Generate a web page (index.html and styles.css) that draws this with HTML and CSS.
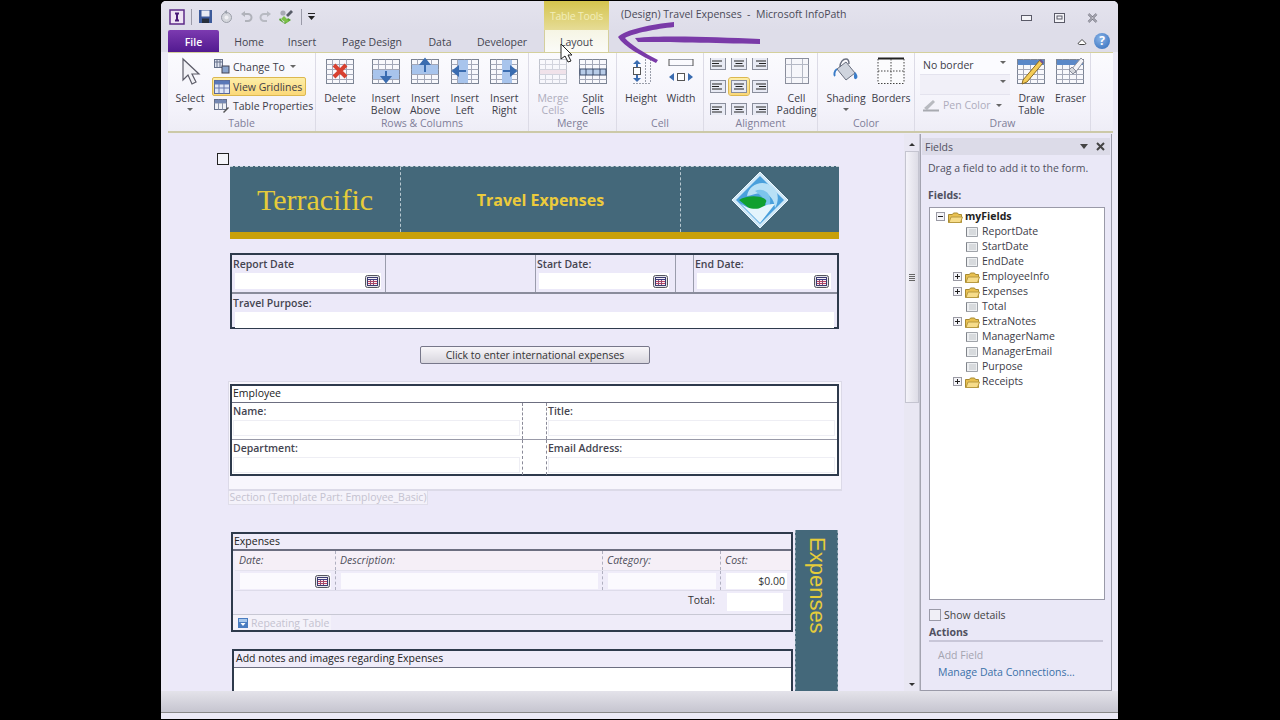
FILE: index.html
```html
<!DOCTYPE html>
<html lang="en">
  <head>
    <meta charset="UTF-8" />
    <meta name="viewport" content="width=device-width, initial-scale=1.0" />
    <title>Travel Expenses - Microsoft InfoPath</title>
    <link rel="stylesheet" href="styles.css">
  </head>
  <body>
    <svg class="defs" width="0" height="0">
      <defs>
        <g id="grid">
          <rect x="1.5" y="3.5" width="27" height="24" fill="#f8f8fc" stroke="#7c8494"/>
          <path d="M1.5 8.5h27M1.5 13.5h27M1.5 18.5h27M1.5 23.5h27M7.5 3.5v24M14.5 3.5v24M21.5 3.5v24" fill="none" stroke="#a4a8b8"/>
        </g>
        <g id="al-l"><rect x="1.5" y="1.5" width="15" height="12" fill="#e8eaf4" stroke="#8a8e9c"/><path d="M3 5h10M3 7.5h7M3 10h10" stroke="#222" fill="none"/></g>
        <g id="al-c"><rect x="1.5" y="1.5" width="15" height="12" fill="#e8eaf4" stroke="#8a8e9c"/><path d="M4 5h10M5.5 7.5h7M4 10h10" stroke="#222" fill="none"/></g>
        <g id="al-r"><rect x="1.5" y="1.5" width="15" height="12" fill="#e8eaf4" stroke="#8a8e9c"/><path d="M5 5h10M8 7.5h7M5 10h10" stroke="#222" fill="none"/></g>
        <g id="cal">
          <rect x="0.5" y="0.5" width="14" height="12" rx="2" fill="#e4e4e8" stroke="#55555f"/>
          <rect x="2.5" y="2.5" width="10" height="8" fill="#f6f0f4" stroke="#3c3c70"/>
          <path d="M3 4.5h9" stroke="#3c3c80"/>
          <path d="M3 6.5h9M3 8.5h9" stroke="#c04060"/>
          <path d="M5.5 5v5M8.5 5v5" stroke="#8a5070"/>
        </g>
        <g id="field">
          <path d="M1.5 1.5h11v9h-11z" fill="#eef0f2" stroke="#a0a4aa"/>
          <path d="M4 4h7M4 6h7M4 8h7" stroke="#c0c4c8"/>
          <path d="M1.5 1.5v9" stroke="#80848a"/>
        </g>
        <g id="folder">
          <path d="M0.5 3.5h4l1-1.5h4l1 1.5h3v8h-13z" fill="#e8c050" stroke="#a88a30"/>
          <path d="M1 11.5l2-5.5h11.5l-2 5.5z" fill="#f6dc8a" stroke="#b89a40"/>
        </g>
        <g id="plus"><rect x="0.5" y="0.5" width="8" height="8" fill="#f4f4f8" stroke="#9a9aa4"/><path d="M2 4.5h5M4.5 2v5" stroke="#222"/></g>
      </defs>
    </svg>

    <div class="window">
      <div class="titlebar">
        <div class="qat">
          <svg width="16" height="16" viewBox="0 0 16 16"><rect x="1" y="1" width="14" height="14" fill="#efe4f4" stroke="#5c2a88" stroke-width="1.5"/><path d="M6 4.5h4M6 11.5h4M8 4.5v7" stroke="#4a1a78" stroke-width="2" fill="none"/></svg>
          <span class="qat-sep"></span>
          <svg width="15" height="15" viewBox="0 0 15 15"><path d="M1 1h13v13H1z" fill="#3c5a9a"/><rect x="3.5" y="1.5" width="8" height="6" fill="#e8ecf4"/><rect x="4" y="9.5" width="7" height="4.5" fill="#28303c"/></svg>
          <svg width="15" height="15" viewBox="0 0 15 15"><circle cx="7.5" cy="8.5" r="5" fill="#d4d6dc" stroke="#9a9ea8"/><circle cx="7.5" cy="8.5" r="2" fill="#f0f0f4"/><path d="M5 3l3-2v4z" fill="#9aa0aa"/></svg>
          <svg width="13" height="15" viewBox="0 0 13 15"><path d="M3 5h5a3.5 3.5 0 0 1 0 7H5" fill="none" stroke="#b0b2ba" stroke-width="2"/><path d="M1 5l4-3v6z" fill="#b0b2ba"/></svg>
          <svg width="13" height="15" viewBox="0 0 13 15"><path d="M10 5H5a3.5 3.5 0 0 0 0 7h3" fill="none" stroke="#b8bac2" stroke-width="2"/><path d="M12 5l-4-3v6z" fill="#b8bac2"/></svg>
          <svg width="17" height="17" viewBox="0 0 17 17"><path d="M2 10l4 5 4-5 3 2-6 4-6-4z" fill="#56a030"/><path d="M3 11l3-3 5 5-3 2z" fill="#7cc048"/><path d="M8 7l5-5 2 2-5 5z" fill="#585c68"/><circle cx="5" cy="5" r="2.6" fill="#a8aab4"/></svg>
          <span class="qat-sep"></span>
          <svg width="7" height="7" viewBox="0 0 7 7"><path d="M0 .5h7M0 3h7l-3.5 4z" fill="#222" stroke="none"/><path d="M0 .5h7" stroke="#222"/></svg>
        </div>
        <div class="context-tab">Table Tools</div>
        <div class="doc-title">(Design) Travel Expenses &nbsp;-&nbsp; Microsoft InfoPath</div>
        <div class="win-controls">
          <svg width="11" height="6" viewBox="0 0 11 6"><rect x=".5" y=".5" width="10" height="5" fill="#f4f4f8" stroke="#5a5a68"/></svg>
          <svg width="11" height="10" viewBox="0 0 11 10"><rect x=".5" y=".5" width="10" height="9" fill="#f4f4f8" stroke="#5a5a68"/><rect x="3" y="3" width="5" height="3" fill="none" stroke="#5a5a68"/></svg>
          <svg width="11" height="10" viewBox="0 0 11 10"><path d="M1.5 1l8 8M9.5 1l-8 8" stroke="#6a6a78" stroke-width="2.4"/><path d="M1.5 1l8 8M9.5 1l-8 8" stroke="#f0f0f4" stroke-width=".8"/></svg>
        </div>
      </div>

      <div class="tabs">
        <div class="tab tab-file">File</div>
        <div class="tab tab-home">Home</div>
        <div class="tab tab-insert">Insert</div>
        <div class="tab tab-page">Page Design</div>
        <div class="tab tab-data">Data</div>
        <div class="tab tab-dev">Developer</div>
        <div class="tab tab-layout">Layout</div>
        <div class="tab-right">
          <svg width="10" height="7" viewBox="0 0 10 7"><path d="M1 5.5l4-4 4 4-1.5 1h-5z" fill="#fff" stroke="#444"/></svg>
          <span class="help">?</span>
        </div>
      </div>

      <div class="ribbon">
        <div class="group group-table">
          <div class="group-body">
            <div class="big select-btn">
              <svg width="30" height="30" viewBox="0 0 30 30"><path d="M8 3v21l5-5 4 9 4-2-4-8h7z" fill="#f2f2f6" stroke="#5c5c68" stroke-width="1.2"/></svg>
              <span>Select</span>
              <i class="drop"></i>
            </div>
            <div class="small-col">
              <div class="small">
                <svg width="16" height="15" viewBox="0 0 16 15"><rect x=".5" y=".5" width="8" height="8" fill="#dfe4f0" stroke="#66708a"/><path d="M.5 3h8M3 .5v8M6 .5v8" stroke="#66708a"/><rect x="8" y="7" width="7" height="7" fill="#8aa4cc" stroke="#445"/></svg>
                Change To <i class="drop small-drop"></i>
              </div>
              <div class="small small-on">
                <svg width="16" height="14" viewBox="0 0 16 14"><rect x=".5" y=".5" width="15" height="13" fill="#dfe6f6" stroke="#5a6a98"/><path d="M.5 4h15M.5 8h15M5 .5v13M10 .5v13" stroke="#6a7ab0"/><rect x="1" y="1" width="14" height="3" fill="#5a78b8"/></svg>
                View Gridlines
              </div>
              <div class="small">
                <svg width="16" height="15" viewBox="0 0 16 15"><rect x=".5" y=".5" width="12" height="10" fill="#eef0f6" stroke="#66708a"/><path d="M.5 4h12M4.500 .5v10M8.500 .5v10" stroke="#8a94aa"/><rect x="1" y="1" width="11" height="3" fill="#7488b4"/><path d="M9 13l5-5 1 1-5 5z" fill="#555"/></svg>
                Table Properties
              </div>
            </div>
          </div>
          <div class="group-label">Table</div>
        </div>

        <div class="group group-rows">
          <div class="group-body">
            <div class="big delete-btn">
              <svg width="30" height="30" viewBox="0 0 30 30"><use href="#grid"/><path d="M9 9l12 12M21 9L9 21" stroke="#d84030" stroke-width="4"/></svg>
              <span>Delete</span>
              <i class="drop"></i>
            </div>
            <div class="big">
              <svg width="30" height="30" viewBox="0 0 30 30"><use href="#grid"/><rect x="2" y="14" width="26" height="9" fill="#a8c4ec"/><path d="M15 15v10M11 21l4 5 4-5z" fill="#3a6cb0" stroke="#3a6cb0" stroke-width="2"/></svg>
              <span>Insert<br>Below</span>
            </div>
            <div class="big">
              <svg width="30" height="30" viewBox="0 0 30 30"><use href="#grid"/><rect x="2" y="9" width="26" height="9" fill="#a8c4ec"/><path d="M15 16V5M11 8l4-5 4 5z" fill="#3a6cb0" stroke="#3a6cb0" stroke-width="2"/></svg>
              <span>Insert<br>Above</span>
            </div>
            <div class="big">
              <svg width="30" height="30" viewBox="0 0 30 30"><use href="#grid"/><rect x="8" y="4" width="10" height="23" fill="#a8c4ec"/><path d="M16 15H5M8 11l-5 4 5 4z" fill="#3a6cb0" stroke="#3a6cb0" stroke-width="2"/></svg>
              <span>Insert<br>Left</span>
            </div>
            <div class="big">
              <svg width="30" height="30" viewBox="0 0 30 30"><use href="#grid"/><rect x="13" y="4" width="10" height="23" fill="#a8c4ec"/><path d="M14 15h11M22 11l5 4-5 4z" fill="#3a6cb0" stroke="#3a6cb0" stroke-width="2"/></svg>
              <span>Insert<br>Right</span>
            </div>
          </div>
          <div class="group-label">Rows &amp; Columns</div>
        </div>

        <div class="group group-merge">
          <div class="group-body">
            <div class="big disabled">
              <svg width="30" height="30" viewBox="0 0 30 30" opacity=".45"><use href="#grid"/><rect x="2" y="14" width="26" height="4" fill="#e8c8d4"/></svg>
              <span>Merge<br>Cells</span>
            </div>
            <div class="big">
              <svg width="30" height="30" viewBox="0 0 30 30"><use href="#grid"/><rect x="2" y="13" width="26" height="6" fill="#b8cce8" stroke="#3a4a6a"/><path d="M8 13v6M15 13v6M22 13v6" stroke="#3a4a6a"/></svg>
              <span>Split<br>Cells</span>
            </div>
          </div>
          <div class="group-label">Merge</div>
        </div>

        <div class="group group-cell">
          <div class="group-body">
            <div class="big">
              <svg width="30" height="30" viewBox="0 0 30 30"><path d="M11 8v4M11 18v5" stroke="#3a6cb0" stroke-width="2"/><path d="M7 8l4-4 4 4zM7 22l4 4 4-4z" fill="#3a6cb0"/><rect x="7.500" y="11.500" width="7" height="7" fill="#fff" stroke="#555"/><path d="M19.500 3v24M24.500 3v24" stroke="#9a9eaa" stroke-dasharray="2 1"/><path d="M7 27.500h18" stroke="#9a9eaa" stroke-dasharray="2 1"/></svg>
              <span>Height</span>
            </div>
            <div class="big">
              <svg width="30" height="30" viewBox="0 0 30 30"><path d="M3 3.500h24M3 9.500h24" stroke="#9a9eaa"/><path d="M3 3v7M27 3v7" stroke="#555"/><path d="M3 21l5-4v8zM27 21l-5-4v8z" fill="#3a6cb0"/><rect x="11.500" y="17.500" width="7" height="7" fill="#fff" stroke="#555"/></svg>
              <span>Width</span>
            </div>
          </div>
          <div class="group-label">Cell</div>
        </div>

        <div class="group group-align">
          <div class="group-body">
            <div class="align-grid">
              <svg class="al" width="18" height="15" viewBox="0 0 18 15"><use href="#al-l" y="-2"/></svg>
              <svg class="al" width="18" height="15" viewBox="0 0 18 15"><use href="#al-c" y="-2"/></svg>
              <svg class="al" width="18" height="15" viewBox="0 0 18 15"><use href="#al-r" y="-2"/></svg>
              <svg class="al" width="18" height="15" viewBox="0 0 18 15"><use href="#al-l"/></svg>
              <svg class="al al-on" width="18" height="15" viewBox="0 0 18 15"><use href="#al-c"/></svg>
              <svg class="al" width="18" height="15" viewBox="0 0 18 15"><use href="#al-r"/></svg>
              <svg class="al" width="18" height="15" viewBox="0 0 18 15"><use href="#al-l" y="2"/></svg>
              <svg class="al" width="18" height="15" viewBox="0 0 18 15"><use href="#al-c" y="2"/></svg>
              <svg class="al" width="18" height="15" viewBox="0 0 18 15"><use href="#al-r" y="2"/></svg>
            </div>
            <div class="big padding-btn">
              <svg width="30" height="30" viewBox="0 0 30 30"><rect x="3.500" y="2.500" width="23" height="25" fill="#f6f6fa" stroke="#8a8e9c"/><path d="M9.500 3v24M20.500 3v24M3.500 8.500h23M3.500 21.500h23" stroke="#b4b8c4"/></svg>
              <span>Cell<br>Padding</span>
            </div>
          </div>
          <div class="group-label">Alignment</div>
        </div>

        <div class="group group-color">
          <div class="group-body">
            <div class="big big-wide">
              <svg width="30" height="30" viewBox="0 0 30 30"><path d="M6 13L15 6l9 11-9 7z" fill="#cfd4de" stroke="#6a7080"/><path d="M9 11c0-5 3-8 6-8s3 3 3 5" fill="none" stroke="#6a7080" stroke-width="1.500"/><path d="M24 16c3 3 3 6 1 7s-3-3-1-7z" fill="#3a7cc8"/><path d="M6 13c-3 2-3 6-2 7" fill="none" stroke="#3a7cc8" stroke-width="2"/></svg>
              <span>Shading</span>
              <i class="drop"></i>
            </div>
            <div class="big">
              <svg width="30" height="30" viewBox="0 0 30 30"><rect x="2" y="2" width="26" height="26" fill="#fbfbfd"/><path d="M2 2.500h26M2 2.500" stroke="#222" stroke-width="2"/><path d="M15 3v24M2 15h26M2 3v24M28 3v24M2 27.500h26" stroke="#444" stroke-dasharray="1.500 1.500"/></svg>
              <span>Borders</span>
            </div>
          </div>
          <div class="group-label">Color</div>
        </div>

        <div class="group group-draw">
          <div class="group-body">
            <div class="pen-col">
              <div class="combo">No border <i class="drop combo-drop"></i></div>
              <div class="combo combo-empty"><i class="drop combo-drop"></i></div>
              <div class="pen-color">
                <svg width="18" height="14" viewBox="0 0 18 14"><path d="M2 10l9-8 2 2-8 8z" fill="#b8bac0"/><path d="M1 12.500h16" stroke="#a8aab0" stroke-width="2"/></svg>
                Pen Color <i class="drop small-drop"></i>
              </div>
            </div>
            <div class="big">
              <svg width="30" height="30" viewBox="0 0 30 30"><use href="#grid"/><rect x="2" y="4" width="26" height="5" fill="#5a88c8"/><path d="M7 24L24 4l3 3L11 26l-5 2z" fill="#f4cc58" stroke="#8a6a20"/><path d="M24 4l3 3" stroke="#705090" stroke-width="2"/></svg>
              <span>Draw<br>Table</span>
            </div>
            <div class="big">
              <svg width="30" height="30" viewBox="0 0 30 30"><use href="#grid"/><rect x="2" y="4" width="26" height="5" fill="#5a88c8"/><path d="M16 14L26 2l3 3-9 12z" fill="#f4f4f8" stroke="#8a8e9c"/><path d="M14 14l3-3 4 4-3 3z" fill="#d4d6dc" stroke="#8a8e9c"/></svg>
              <span>Eraser</span>
            </div>
          </div>
          <div class="group-label">Draw</div>
        </div>
      </div>

      <div class="workspace">
        <div class="canvas">
          <div class="form">
            <div class="table-handle"></div>

            <div class="banner">
              <div class="banner-cell banner-logo">Terracific</div>
              <div class="banner-cell banner-title">Travel Expenses</div>
              <div class="banner-cell banner-mark">
                <svg width="58" height="58" viewBox="0 0 58 58">
                  <path d="M29 1l28 28-28 28L1 29z" fill="#cfe8f8" stroke="#eaf6fc"/>
                  <path d="M29 5L53 29 29 53 5 29z" fill="#4aa0dc"/>
                  <path d="M16 25c2-12 16-17 26-9 6 5 6 14 2 21-1-9-6-15-13-15-7 0-11 3-15 3z" fill="#b8e0f6"/>
                  <path d="M24 20c6-3 14 0 15 7 1 5-1 9-3 12-1-8-3-13-12-19z" fill="#7cc4ec"/>
                  <path d="M8 29c8-5 22-5 27 0 1 2-1 3-1 5L29 46z" fill="#10a030"/>
                  <path d="M29 52L9 32c6 5 16 8 22 4 6-3 9-3 13-3z" fill="#e4f4fc"/>
                </svg>
              </div>
            </div>

            <div class="box report-box">
              <div class="report-row">
                <div class="cell report-date">
                  <label>Report Date</label>
                  <div class="input"><svg class="cal-icon" width="15" height="13"><use href="#cal"/></svg></div>
                </div>
                <div class="cell report-gap"></div>
                <div class="cell report-start">
                  <label>Start Date:</label>
                  <div class="input"><svg class="cal-icon" width="15" height="13"><use href="#cal"/></svg></div>
                </div>
                <div class="cell report-gap2"></div>
                <div class="cell report-end">
                  <label>End Date:</label>
                  <div class="input"><svg class="cal-icon" width="15" height="13"><use href="#cal"/></svg></div>
                </div>
              </div>
              <div class="cell purpose">
                <label>Travel Purpose:</label>
                <div class="input input-wide"></div>
              </div>
            </div>

            <div class="intl-row"><div class="intl-btn">Click to enter international expenses</div></div>

            <div class="section">
              <div class="box employee-box">
                <div class="box-title">Employee</div>
                <div class="employee-row">
                  <div class="emp-cell"><label>Name:</label><div class="input input-line"></div></div>
                  <div class="emp-gap"></div>
                  <div class="emp-cell"><label>Title:</label><div class="input input-line"></div></div>
                </div>
                <div class="employee-row employee-last">
                  <div class="emp-cell"><label>Department:</label><div class="input input-line"></div></div>
                  <div class="emp-gap"></div>
                  <div class="emp-cell"><label>Email Address:</label><div class="input input-line"></div></div>
                </div>
              </div>
            </div>
            <div class="section-tag">Section (Template Part: Employee_Basic)</div>

            <div class="expense-wrap">
              <div class="expense-col">
                <div class="box expense-box">
                  <div class="box-title expense-title">Expenses</div>
                  <div class="exp-grid exp-head">
                    <div>Date:</div><div>Description:</div><div>Category:</div><div>Cost:</div>
                  </div>
                  <div class="exp-grid exp-row">
                    <div><div class="input exp-input"><svg class="cal-icon" width="15" height="13"><use href="#cal"/></svg></div></div>
                    <div><div class="input exp-input"></div></div>
                    <div><div class="input exp-input"></div></div>
                    <div><div class="input exp-input exp-cost">$0.00</div></div>
                  </div>
                  <div class="exp-total">
                    <span>Total:</span>
                    <div class="input total-input"></div>
                  </div>
                  <div class="repeat-row">
                    <div class="repeat-tag">
                      <svg width="10" height="10" viewBox="0 0 10 10"><rect width="10" height="10" fill="#4a7cc0"/><rect x="1" y="1" width="8" height="3" fill="#a8c8ec"/><path d="M2.500 5h5L5 8z" fill="#fff"/></svg>
                      Repeating Table
                    </div>
                  </div>
                </div>
                <div class="box notes-box">
                  <div class="box-title notes-title">Add notes and images regarding Expenses</div>
                  <div class="notes-body"></div>
                </div>
              </div>
              <div class="expense-side"><span>Expenses</span></div>
            </div>
          </div>
        </div>

        <div class="scrollbar">
          <i class="arrow-up"></i>
          <div class="thumb"><b></b></div>
          <i class="arrow-down"></i>
        </div>

        <div class="pane">
          <div class="pane-head">
            <span>Fields</span>
            <i class="pane-drop"></i>
            <svg width="9" height="9" viewBox="0 0 9 9"><path d="M1 1l7 7M8 1L1 8" stroke="#444" stroke-width="2"/></svg>
          </div>
          <div class="pane-hint">Drag a field to add it to the form.</div>
          <div class="pane-label">Fields:</div>
          <div class="tree">
            <div class="node node-root">
              <svg class="exp" width="9" height="9"><rect x=".5" y=".5" width="8" height="8" fill="#f4f4f8" stroke="#9a9aa4"/><path d="M2 4.500h5" stroke="#222"/></svg>
              <svg class="ico" width="15" height="12"><use href="#folder"/></svg>
              <b>myFields</b>
            </div>
            <div class="node"><span class="exp-space"></span><svg class="ico" width="15" height="12"><use href="#field"/></svg>ReportDate</div>
            <div class="node"><span class="exp-space"></span><svg class="ico" width="15" height="12"><use href="#field"/></svg>StartDate</div>
            <div class="node"><span class="exp-space"></span><svg class="ico" width="15" height="12"><use href="#field"/></svg>EndDate</div>
            <div class="node"><svg class="exp" width="9" height="9"><use href="#plus"/></svg><svg class="ico" width="15" height="12"><use href="#folder"/></svg>EmployeeInfo</div>
            <div class="node"><svg class="exp" width="9" height="9"><use href="#plus"/></svg><svg class="ico" width="15" height="12"><use href="#folder"/></svg>Expenses</div>
            <div class="node"><span class="exp-space"></span><svg class="ico" width="15" height="12"><use href="#field"/></svg>Total</div>
            <div class="node"><svg class="exp" width="9" height="9"><use href="#plus"/></svg><svg class="ico" width="15" height="12"><use href="#folder"/></svg>ExtraNotes</div>
            <div class="node"><span class="exp-space"></span><svg class="ico" width="15" height="12"><use href="#field"/></svg>ManagerName</div>
            <div class="node"><span class="exp-space"></span><svg class="ico" width="15" height="12"><use href="#field"/></svg>ManagerEmail</div>
            <div class="node"><span class="exp-space"></span><svg class="ico" width="15" height="12"><use href="#field"/></svg>Purpose</div>
            <div class="node"><svg class="exp" width="9" height="9"><use href="#plus"/></svg><svg class="ico" width="15" height="12"><use href="#folder"/></svg>Receipts</div>
          </div>
          <div class="show-details"><span class="check"></span>Show details</div>
          <div class="actions-label">Actions</div>
          <div class="action action-off">Add Field</div>
          <div class="action action-link">Manage Data Connections...</div>
        </div>
      </div>

      <div class="statusbar"></div>

      <svg class="pointer-arrow" width="160" height="60" viewBox="0 0 160 60">
        <path d="M72 4C50 6 22 12 16 19c6 10 24 19 38 26l2-3C42 35 28 26 23 20 32 15 54 11 72 9z" fill="#7a3aa8"/>
        <path d="M33 20c30-3 80-1 125 1v5C110 25 66 24 36 24z" fill="#7a3aa8"/>
      </svg>
      <svg class="cursor" width="13" height="20" viewBox="0 0 13 20"><path d="M1 1v15l4-3 3 6 3-1-3-6h4z" fill="#fff" stroke="#222"/></svg>
    </div>
  </body>
</html>
```

FILE: styles.css
```css
html,
body {
  margin: 0;
  padding: 0;
  height: 100%;
}
body {
  background: #000;
  font-family: "Open Sans", "Noto Sans", sans-serif;
  font-size: 10.5px;
  color: #3c3c48;
  overflow: hidden;
}
.defs {
  position: absolute;
}
.window {
  position: relative;
  width: 957px;
  height: 718px;
  margin: 1px 0 0 161px;
  background: #eceaf6;
  border-radius: 5px 5px 0 0;
  display: flex;
  flex-direction: column;
  overflow: hidden;
}

/* title bar */
.titlebar {
  height: 29px;
  display: flex;
  background: linear-gradient(#e4e3ee, #dedde9);
}
.qat {
  width: 383px;
  padding-left: 8px;
  padding-top: 2px;
  display: flex;
  align-items: center;
  gap: 6px;
  box-sizing: border-box;
}
.qat-sep {
  width: 1px;
  height: 16px;
  background: #9a9aa8;
}
.context-tab {
  width: 65px;
  text-align: center;
  line-height: 31px;
  color: #f2eeb8;
  background: linear-gradient(#d4c44e, #e6dc96);
  font-size: 10.5px;
  letter-spacing: -0.2px;
}
.doc-title {
  margin-left: 12px;
  margin-top: 6px;
  width: 400px;
  color: #4a4a58;
  font-size: 10.5px;
}
.win-controls {
  display: flex;
  align-items: center;
  gap: 22px;
  padding-top: 5px;
}

/* ribbon tabs */
.tabs {
  height: 22px;
  display: flex;
  align-items: stretch;
  position: relative;
  background: #dedde9;
  font-size: 10.5px;
}
.tab {
  line-height: 24px;
  text-align: center;
  color: #444450;
}
.tab-file {
  margin-left: 7px;
  width: 51px;
  color: #fff;
  font-weight: 600;
  border-radius: 2px 2px 0 0;
  background: linear-gradient(#7c3ab0, #521a90);
}
.tab-home {
  width: 60px;
}
.tab-insert {
  width: 46px;
}
.tab-page {
  width: 94px;
}
.tab-data {
  width: 42px;
}
.tab-dev {
  width: 82px;
}
.tab-layout {
  margin-left: 1px;
  width: 65px;
  background: linear-gradient(#f6f5e4, #fbfbf8);
  border-left: 1px solid #d4cf9c;
  border-right: 1px solid #d4cf9c;
  box-sizing: border-box;
}
.tab-right {
  margin-left: auto;
  margin-right: 8px;
  display: flex;
  align-items: center;
  gap: 7px;
}
.help {
  width: 16px;
  height: 16px;
  border-radius: 50%;
  background: radial-gradient(circle at 40% 35%, #8ab4e8, #2c68b8);
  color: #fff;
  font-weight: 700;
  font-size: 12px;
  line-height: 16px;
  text-align: center;
}

/* ribbon */
.ribbon {
  height: 81px;
  margin: 0 5px 0 7px;
  display: flex;
  background: linear-gradient(#fbfbfe, #f3f2fa 75%, #eeedf6);
  border-top: 1px solid #d4d09c;
  border-bottom: 2px solid #ccc9a8;
  box-sizing: border-box;
}
.group {
  display: flex;
  flex-direction: column;
  border-right: 1px solid #dcdbe6;
  box-sizing: border-box;
}
.group-body {
  flex: 1;
  display: flex;
  padding-top: 3px;
  min-height: 0;
}
.group-label {
  text-align: center;
  line-height: 14px;
  height: 15px;
  color: #807e98;
  font-size: 10.5px;
}
.group-table {
  width: 148px;
}
.group-rows {
  width: 213px;
}
.group-merge {
  width: 88px;
}
.group-cell {
  width: 87px;
}
.group-align {
  width: 114px;
}
.group-color {
  width: 97px;
}
.group-draw {
  width: 176px;
}
.big {
  width: 39.5px;
  display: flex;
  flex-direction: column;
  align-items: center;
  line-height: 12px;
  text-align: center;
  color: #3c3c48;
}
.big svg {
  margin-bottom: 6px;
  flex: none;
}
.big span {
  white-space: nowrap;
}
.select-btn {
  width: 44px;
}
.delete-btn {
  width: 48px;
  margin-left: 0;
  margin-right: 2px;
}
.disabled {
  color: #aeacbc;
}
.drop {
  display: inline-block;
  width: 0;
  height: 0;
  margin-top: 4px;
  border: 3px solid transparent;
  border-top-color: #666;
  border-bottom: 0;
}
.small-col {
  display: flex;
  flex-direction: column;
  margin-top: 1px;
  gap: 0;
}
.small {
  height: 20.500px;
  width: 94px;
  display: flex;
  align-items: center;
  gap: 3px;
  padding-left: 2px;
  box-sizing: border-box;
  white-space: nowrap;
}
.small svg {
  flex: none;
}
.small-on {
  background: linear-gradient(#fdeea8, #fbd878);
  border: 1px solid #dcb850;
  border-radius: 2px;
  padding-left: 1px;
}
.small-drop {
  margin: 0 0 0 2px;
}
.group-merge .group-body,
.group-cell .group-body {
  padding-left: 4px;
}
.group-merge .big,
.group-cell .big {
  width: 40px;
}
.group-rows .group-body {
  padding-left: 0;
}
.group-cell .big svg {
  margin-bottom: 6px;
}
.align-grid {
  display: grid;
  grid-template-columns: repeat(3, 21px);
  grid-auto-rows: 21px;
  margin-left: 4px;
  margin-top: 1px;
}
.al {
  display: block;
  padding: 1px;
}
.al-on {
  background: linear-gradient(#fdeea8, #fbd878);
  outline: 1px solid #dcb850;
  outline-offset: 0;
  border-radius: 2px;
}
.padding-btn {
  margin-left: 5px;
  width: 44px;
}
.big-wide {
  width: 50px;
  margin-left: 3px;
}
.group-color .big:last-child {
  width: 40px;
}
.pen-col {
  width: 91px;
  margin-left: 5px;
  margin-right: 2px;
  display: flex;
  flex-direction: column;
}
.combo {
  height: 20px;
  line-height: 18px;
  padding-left: 3px;
  position: relative;
  background: #fbfbff;
  border-bottom: 1px solid #e4e3ee;
  box-sizing: border-box;
}
.combo-empty {
  background: #f1f0f8;
}
.combo-drop {
  position: absolute;
  right: 4px;
  top: 5px;
  margin: 0;
}
.pen-color {
  height: 22px;
  display: flex;
  align-items: center;
  gap: 3px;
  padding-left: 2px;
  color: #aeacbc;
}

/* form canvas */
.workspace {
  flex: 1;
  min-height: 0;
  display: flex;
  margin: 1px 6px 0 7px;
}
.canvas {
  width: 736px;
  overflow: hidden;
  background: #ece9f9;
}
.form {
  width: 620px;
  margin-left: 62px;
  padding-top: 19px;
  position: relative;
}
.table-handle {
  position: absolute;
  left: -13px;
  top: 19px;
  width: 10px;
  height: 10px;
  border: 1.500px solid #222;
  background: #f4f4fa;
}
.banner {
  margin-top: 13px;
  width: 609px;
  height: 73px;
  display: grid;
  grid-template-columns: 171px 280px 158px;
  background: #44687a;
  border-bottom: 7px solid #c8a00a;
  box-sizing: border-box;
  border-top: 1px dashed #c4d0d8;
}
.banner-cell {
  display: flex;
  align-items: center;
  justify-content: center;
  border-right: 1px dashed #b8c8d0;
}
.banner-logo {
  font-family: "Liberation Serif", serif;
  font-size: 30px;
  color: #e6cc3a;
}
.banner-title {
  font-size: 16px;
  font-weight: 700;
  color: #eccb3c;
}
.banner-mark {
  border-right: 0;
}
.box {
  border: 2px solid #2e3a4c;
  box-sizing: border-box;
}
.report-box {
  margin-top: 14px;
  width: 609px;
  height: 76px;
}
.report-row {
  display: grid;
  grid-template-columns: 154px 150px 140px 18px 1fr;
  height: 37px;
  border-bottom: 2px solid #8a8c9c;
}
.cell {
  box-sizing: border-box;
  padding: 2px 0 0 1px;
  border-right: 1px solid #9a9cac;
}
.report-end,
.purpose {
  border-right: 0;
}
label {
  display: block;
  line-height: 15px;
  font-weight: 600;
  color: #444450;
  white-space: nowrap;
}
.input {
  position: relative;
  height: 16px;
  margin: 1px 4px 0 2px;
  background: #fff;
}
.cal-icon {
  position: absolute;
  right: 1px;
  top: 2px;
}
.report-start .input,
.report-end .input {
  margin-right: 6px;
}
.report-end .cal-icon {
  right: 2px;
}
.input-wide {
  height: 16px;
  margin-right: 3px;
}
.intl-row {
  display: flex;
  width: 609px;
  justify-content: center;
  margin-top: 17px;
}
.intl-btn {
  width: 230px;
  margin-left: 1px;
  height: 18px;
  box-sizing: border-box;
  border: 1px solid #77778a;
  border-radius: 2px;
  text-align: center;
  line-height: 16px;
  color: #333;
  background: linear-gradient(#f8f6fa, #d8d6de);
}
.section {
  margin-top: 17px;
  margin-left: -2px;
  width: 614px;
  height: 110px;
  box-sizing: border-box;
  padding: 2px 3px 0 2px;
  background: #f8f6fd;
  border: 1px solid #dcdae8;
  border-bottom-width: 2px;
}
.employee-box {
  width: 609px;
  margin-left: -1px;
  height: 92px;
  background: #fff;
}
.box-title {
  height: 16px;
  line-height: 15px;
  padding-left: 1px;
  border-bottom: 1px solid #6c6e80;
  color: #222;
  box-sizing: content-box;
}
.employee-row {
  display: grid;
  grid-template-columns: 290px 25px 1fr;
  height: 36px;
  border-bottom: 1px solid #999aa8;
}
.employee-last {
  height: 35px;
  border-bottom: 0;
}
.emp-cell {
  min-width: 0;
  padding: 1px 0 0 1px;
}
.emp-gap {
  border-left: 1px dashed #8a8a98;
  border-right: 1px dashed #8a8a98;
}
.input-line {
  height: 16px;
  margin: 1px 2px 0 0;
  border: 1px solid #eeeef4;
  box-sizing: border-box;
}
.section-tag {
  margin-left: -2px;
  width: 200px;
  height: 14px;
  line-height: 13px;
  box-sizing: border-box;
  text-align: center;
  color: #c4c2d0;
  background: #f4f2fa;
  border: 1px solid #e0deea;
  border-top: 0;
  white-space: nowrap;
}
.expense-wrap {
  display: flex;
  margin-top: 25px;
  margin-left: 1px;
  gap: 2px;
  height: 200px;
}
.expense-col {
  width: 562px;
  padding-top: 2px;
}
.expense-box {
  height: 100px;
  background: #efecf9;
}
.expense-title {
  padding-left: 1px;
  height: 15px;
  border-bottom: 2px solid #6c6e80;
}
.exp-grid {
  display: grid;
  grid-template-columns: 101px 267px 118px 1fr;
  margin-left: 2px;
}
.exp-grid > div {
  border-right: 1px dashed #b0b0c0;
  box-sizing: border-box;
}
.exp-grid > div:last-child {
  border-right: 0;
}
.exp-head {
  height: 19px;
  line-height: 18px;
  font-style: italic;
  background: #f5eff7;
  color: #50505c;
}
.exp-head > div {
  padding-left: 4px;
}
.exp-row {
  height: 21px;
  border-top: 1px solid #e4e2ee;
  border-bottom: 1px solid #dedcea;
  box-sizing: border-box;
}
.exp-row > div {
  padding-top: 2px;
}
.exp-input {
  height: 16px;
  margin: 0 4px 0 5px;
  background: #fbfafe;
}
.exp-cost {
  background: #fff;
  color: #333;
  text-align: right;
  line-height: 16px;
  padding-right: 2px;
}
.exp-total {
  height: 23px;
  display: flex;
  justify-content: flex-end;
  align-items: flex-start;
  padding-top: 2px;
  box-sizing: border-box;
  padding-right: 8px;
  gap: 12px;
  color: #333;
}
.total-input {
  width: 56px;
  height: 18px;
  margin: 0;
}
.repeat-row {
  border-top: 1px solid #c8c8d4;
}
.repeat-tag {
  width: 98px;
  height: 15px;
  display: flex;
  align-items: center;
  gap: 3px;
  padding-left: 5px;
  box-sizing: border-box;
  background: #f4f2fa;
  color: #c4c2d0;
  white-space: nowrap;
}
.notes-box {
  margin-top: 17px;
  height: 80px;
  margin-left: 1px;
  background: #fff;
}
.notes-title {
  background: #efecf9;
  padding-left: 2px;
}
.expense-side {
  width: 43px;
  background: #44687a;
  border-left: 1px dashed #8aa0ac;
  border-right: 1px dashed #8aa0ac;
  box-sizing: border-box;
  color: #e6cc3a;
  font-family: "Liberation Sans", sans-serif;
  font-size: 22px;
  display: flex;
  justify-content: center;
}
.expense-side span {
  writing-mode: vertical-rl;
  padding-top: 7px;
}

/* scrollbar */
.scrollbar {
  width: 16px;
  background: #e9e7f3;
  display: flex;
  flex-direction: column;
  align-items: center;
  border-right: 1px solid #c8c8d4;
  box-sizing: border-box;
}
.arrow-up,
.arrow-down {
  width: 0;
  height: 0;
  border: 3.500px solid transparent;
}
.arrow-up {
  border-bottom-color: #333;
  border-top: 0;
  margin: 9px 0 5px;
}
.arrow-down {
  border-top-color: #333;
  border-bottom: 0;
  margin-top: auto;
  margin-bottom: 5px;
}
.thumb {
  width: 14px;
  height: 252px;
  box-sizing: border-box;
  border: 1px solid #c4c4d0;
  background: linear-gradient(90deg, #f4f3f9, #dddce6);
  display: flex;
  align-items: center;
  justify-content: center;
}
.thumb b {
  width: 6px;
  height: 7px;
  background: repeating-linear-gradient(#666 0 1px, transparent 1px 2px);
}

/* fields pane */
.pane {
  flex: 1;
  border-left: 1px solid #a4a4b0;
  border-right: 1px solid #9a9aa8;
  border-bottom: 1px solid #9a9aa8;
  background: #eae8f7;
  padding: 4px 1px 0;
  box-sizing: border-box;
  min-width: 0;
}
.pane-head {
  height: 17px;
  display: flex;
  align-items: center;
  background: #dcdbe8;
  padding: 0 5px 0 3px;
  color: #505060;
}
.pane-head span {
  flex: 1;
}
.pane-drop {
  width: 0;
  height: 0;
  border: 4.500px solid transparent;
  border-top: 5px solid #444;
  border-bottom: 0;
  margin-right: 8px;
}
.pane-hint {
  margin: 6px 0 0 6px;
  line-height: 14px;
  color: #505060;
}
.pane-label {
  margin: 13px 0 0 6px;
  line-height: 14px;
  font-weight: 700;
  color: #505060;
}
.tree {
  width: 176px;
  height: 393px;
  margin: 5px 0 0 7px;
  padding-top: 1px;
  box-sizing: border-box;
  background: #fff;
  border: 1px solid #9a9aa8;
}
.node {
  height: 15px;
  display: flex;
  align-items: center;
  padding-left: 23px;
  line-height: 15px;
  color: #3c3c48;
}
.node-root {
  padding-left: 6px;
  color: #222;
}
.exp,
.exp-space {
  flex: none;
  width: 9px;
  margin-right: 3px;
}
.ico {
  flex: none;
  margin-right: 2px;
}
.show-details {
  display: flex;
  align-items: center;
  gap: 3px;
  margin: 8px 0 0 7px;
  line-height: 14px;
  color: #444;
}
.check {
  width: 10px;
  height: 10px;
  border: 1px solid #9a9aa8;
  background: #f0eff6;
}
.actions-label {
  margin: 4px 7px 0 7px;
  line-height: 13px;
  font-weight: 700;
  color: #505060;
  padding-bottom: 1px;
  border-bottom: 2px solid #c8c6d8;
}
.action {
  margin-left: 16px;
  line-height: 17px;
}
.action-off {
  margin-top: 5px;
  color: #a4a4b0;
}
.action-link {
  color: #3a70a8;
}

.statusbar {
  height: 21px;
  margin-bottom: 6px;
  background: linear-gradient(#e4e3ea, #c6c5d0);
  border-bottom: 1px solid #888;
}

/* video annotation + mouse pointer on top of the app */
.pointer-arrow {
  position: absolute;
  left: 441px;
  top: 17px;
  width: 160px;
  height: 60px;
}
.cursor {
  position: absolute;
  left: 399px;
  top: 42px;
}
```
